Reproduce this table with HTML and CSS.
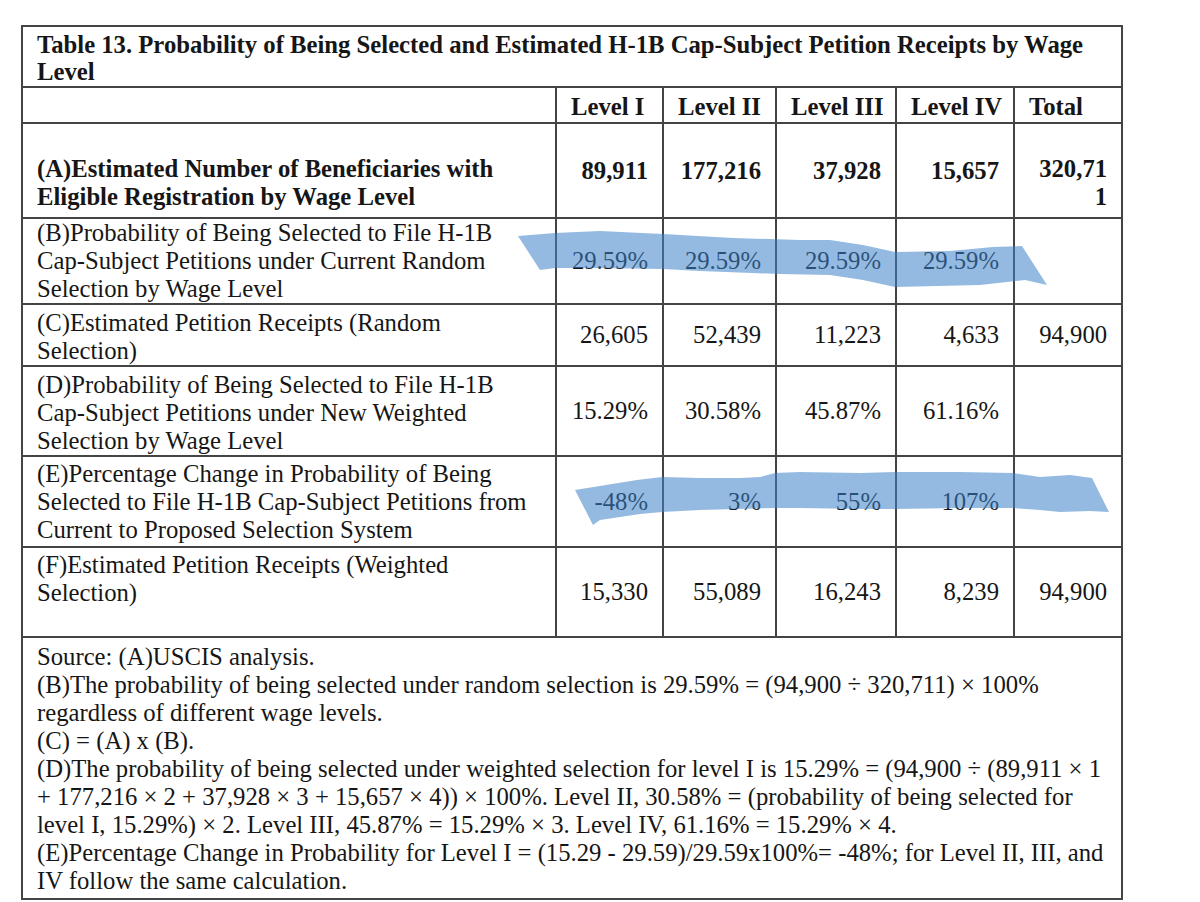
FILE: index.html
```html
<!DOCTYPE html>
<html lang="en">
<head>
<meta charset="utf-8">
<title>Table 13</title>
<link rel="stylesheet" href="styles.css">
</head>
<body>
<div class="sheet">
  <table class="doc-table">
    <colgroup>
      <col class="c-label">
      <col class="c-l1">
      <col class="c-l2">
      <col class="c-l3">
      <col class="c-l4">
      <col class="c-tot">
    </colgroup>
    <tr class="r-title">
      <td class="title" colspan="6">Table 13. Probability of Being Selected and Estimated H-1B Cap-Subject Petition Receipts by Wage<br>Level</td>
    </tr>
    <tr class="r-head">
      <th class="blank"></th>
      <th>Level I</th>
      <th>Level II</th>
      <th>Level III</th>
      <th>Level IV</th>
      <th>Total</th>
    </tr>
    <tr class="r-a">
      <td class="label bold bottom">(A)Estimated Number of Beneficiaries with<br>Eligible Registration by Wage Level</td>
      <td class="num bold">89,911</td>
      <td class="num bold">177,216</td>
      <td class="num bold">37,928</td>
      <td class="num bold">15,657</td>
      <td class="num bold bottom">320,71<br>1</td>
    </tr>
    <tr class="r-b">
      <td class="label">(B)Probability of Being Selected to File H-1B<br>Cap-Subject Petitions under Current Random<br>Selection by Wage Level</td>
      <td class="num">29.59%</td>
      <td class="num">29.59%</td>
      <td class="num">29.59%</td>
      <td class="num">29.59%</td>
      <td class="num"></td>
    </tr>
    <tr class="r-c">
      <td class="label">(C)Estimated Petition Receipts (Random<br>Selection)</td>
      <td class="num">26,605</td>
      <td class="num">52,439</td>
      <td class="num">11,223</td>
      <td class="num">4,633</td>
      <td class="num">94,900</td>
    </tr>
    <tr class="r-d">
      <td class="label">(D)Probability of Being Selected to File H-1B<br>Cap-Subject Petitions under New Weighted<br>Selection by Wage Level</td>
      <td class="num">15.29%</td>
      <td class="num">30.58%</td>
      <td class="num">45.87%</td>
      <td class="num">61.16%</td>
      <td class="num"></td>
    </tr>
    <tr class="r-e">
      <td class="label">(E)Percentage Change in Probability of Being<br>Selected to File H-1B Cap-Subject Petitions from<br>Current to Proposed Selection System</td>
      <td class="num">-48%</td>
      <td class="num">3%</td>
      <td class="num">55%</td>
      <td class="num">107%</td>
      <td class="num"></td>
    </tr>
    <tr class="r-f">
      <td class="label">(F)Estimated Petition Receipts (Weighted<br>Selection)</td>
      <td class="num">15,330</td>
      <td class="num">55,089</td>
      <td class="num">16,243</td>
      <td class="num">8,239</td>
      <td class="num">94,900</td>
    </tr>
    <tr class="r-notes">
      <td class="notes" colspan="6">
        <p>Source: (A)USCIS analysis.</p>
        <p>(B)The probability of being selected under random selection is 29.59% = (94,900 ÷ 320,711) × 100%<br>regardless of different wage levels.</p>
        <p>(C) = (A) x (B).</p>
        <p>(D)The probability of being selected under weighted selection for level I is 15.29% = (94,900 ÷ (89,911 × 1<br>+ 177,216 × 2 + 37,928 × 3 + 15,657 × 4)) × 100%. Level II, 30.58% = (probability of being selected for<br>level I, 15.29%) × 2. Level III, 45.87% = 15.29% × 3. Level IV, 61.16% = 15.29% × 4.</p>
        <p>(E)Percentage Change in Probability for Level I = (15.29 - 29.59)/29.59x100%= -48%; for Level II, III, and<br>IV follow the same calculation.</p>
      </td>
    </tr>
  </table>

  <svg class="marker" width="1200" height="902" viewBox="0 0 1200 902" aria-hidden="true">
    <polygon points="518,236 555,233 600,231 663,234 733,238 800,240 830,240 863,245 895,252 950,251 993,247 1022,246 1047,285 1025,280 980,285 895,287 863,280 830,275 780,274 700,271 663,269 600,268 555,268 540,270"/>
    <polygon points="575,490 637,480 662,477 700,478 740,478 760,477 775,473 800,472 860,473 895,472 960,472 1013,473 1040,477 1070,475 1092,478 1109,512 1090,511 1060,512 1040,510 1013,508 960,508 895,509 860,509 800,508 775,508 700,510 662,512 640,514 600,520 593,525"/>
  </svg>
</div>
</body>
</html>
```

FILE: styles.css
```css
html, body {
  margin: 0;
  padding: 0;
  background: #ffffff;
}

body {
  font-family: "Liberation Serif", "Times New Roman", serif;
  color: #161616;
}

.sheet {
  position: relative;
  width: 1200px;
  height: 902px;
  padding: 25px 0 0 21px;
  box-sizing: border-box;
  overflow: hidden;
}

.doc-table {
  border-collapse: collapse;
  table-layout: fixed;
  width: 1100px;
  font-size: 24.7px;
  line-height: 28px;
}

.c-label { width: 534px; }
.c-l1 { width: 107px; }
.c-l2 { width: 113px; }
.c-l3 { width: 120px; }
.c-l4 { width: 118px; }
.c-tot { width: 108px; }

.doc-table td,
.doc-table th {
  border: 2px solid #444444;
  padding: 3px 14px 0;
  vertical-align: top;
  text-align: left;
  white-space: nowrap;
}

.doc-table td.title {
  font-weight: bold;
  line-height: 27px;
  padding-top: 4px;
}

.r-title { height: 61px; }
.r-head { height: 36px; }
.r-a { height: 95px; }
.r-b { height: 85px; }
.r-c { height: 62px; }
.r-d { height: 90px; }
.r-e { height: 91px; }
.r-f { height: 90px; }
.r-notes { height: 260px; }

.doc-table th {
  font-weight: bold;
  vertical-align: bottom;
  padding: 0 0 1px 14px;
}

.bold { font-weight: bold; }

.r-b td.label { padding-top: 0; }
.r-c td.label,
.r-d td.label { padding-top: 4px; }

.doc-table td.num {
  text-align: right;
  vertical-align: middle;
  padding: 0 14px 0 0;
}

.doc-table td.bottom {
  vertical-align: bottom;
  padding-bottom: 6px;
}

.doc-table td.notes {
  padding: 5px 14px 3px;
}

.notes p {
  margin: 0;
}

.marker {
  position: absolute;
  left: 0;
  top: 0;
  pointer-events: none;
}

.marker polygon {
  fill: rgb(60, 130, 200);
  fill-opacity: 0.55;
}
```
